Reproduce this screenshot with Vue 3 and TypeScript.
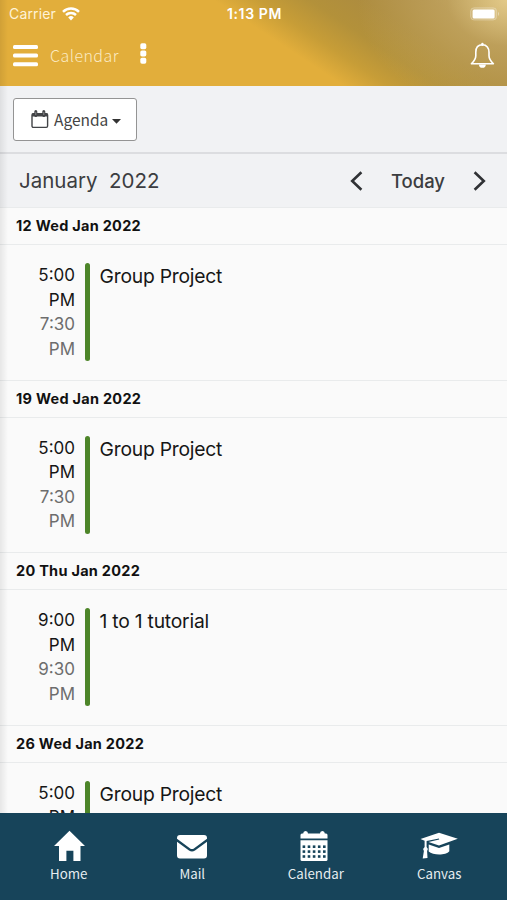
<script setup lang="ts">
interface CalendarEvent {
  start: string
  end: string
  title: string
}

interface AgendaDay {
  label: string
  event: CalendarEvent
}

const days: AgendaDay[] = [
  { label: '12 Wed Jan 2022', event: { start: '5:00', end: '7:30', title: 'Group Project' } },
  { label: '19 Wed Jan 2022', event: { start: '5:00', end: '7:30', title: 'Group Project' } },
  { label: '20 Thu Jan 2022', event: { start: '9:00', end: '9:30', title: '1 to 1 tutorial' } },
  { label: '26 Wed Jan 2022', event: { start: '5:00', end: '7:30', title: 'Group Project' } },
]

const calendarRows = [15.4, 20.3, 25.2]
const calendarCols = [2.6, 7.7, 12.8, 17.9, 23]
</script>

<template>
  <div class="app">
    <header class="header">
      <div class="status">
        <div class="carrier">
          <span>Carrier</span>
          <svg width="18" height="14" viewBox="0 0 18 14" fill="none" stroke="#fff" stroke-width="2.5">
            <path d="M1 4.8a11.5 11.5 0 0 1 16 0" />
            <path d="M4 8a7.3 7.3 0 0 1 10 0" />
            <path d="M6.2 10.4a4 4 0 0 1 5.6 0L9 13.4z" fill="#fff" stroke="none" />
          </svg>
        </div>
        <span class="clock">1:13 PM</span>
        <svg class="battery" width="30" height="14" viewBox="0 0 30 14">
          <rect x=".6" y=".8" width="26" height="12.2" rx="3.5" fill="#fff" fill-opacity=".12" stroke="#fff" stroke-opacity=".25" />
          <rect x="2.6" y="2.6" width="22" height="8.8" rx="1.5" fill="#fff" />
          <path d="M28 4.8q2 2.1 0 4.2z" fill="#fff" fill-opacity=".4" />
        </svg>
      </div>
      <div class="titlebar">
        <svg width="25" height="22" viewBox="0 0 25 22" fill="#fff">
          <rect y="0" width="25" height="4" rx="1.5" />
          <rect y="8.6" width="25" height="4" rx="1.5" />
          <rect y="17.2" width="25" height="4" rx="1.5" />
        </svg>
        <h1>Calendar</h1>
        <svg class="more" width="7" height="22" viewBox="0 0 7 22" fill="#fff">
          <rect x=".3" y=".2" width="6" height="6" rx="1.7" />
          <rect x=".3" y="7.4" width="6" height="6" rx="1.7" />
          <rect x=".3" y="14.7" width="6" height="6" rx="1.7" />
        </svg>
        <svg class="bell" width="25" height="28" viewBox="0 0 25 28" fill="none" stroke="#fff" stroke-width="1.6" stroke-linejoin="round">
          <path d="M12.4 2.8C8 2.8 5.8 6 5.8 10.2v3.5c0 3.4-1.8 5.5-4.4 8.1h22c-2.6-2.6-4.4-4.7-4.4-8.1v-3.5c0-4.2-2.2-7.4-6.6-7.4z" />
          <path d="M12.4 2.8V2" stroke-width="2.4" stroke-linecap="round" />
          <path d="M9 22.4h6.8a3.4 3.4 0 0 1-6.8 0z" fill="#fff" stroke="none" />
        </svg>
      </div>
    </header>

    <section class="toolbar">
      <button class="view">
        <svg width="18" height="19" viewBox="0 0 18 19" fill="none" stroke="#424447">
          <rect x="1" y="3.8" width="15.6" height="13.6" rx="1.3" stroke-width="1.4" />
          <path d="M1 5h15.6" stroke-width="3" />
          <path d="M4.8 1.5v4M12.8 1.5v4" stroke-width="3" stroke-linecap="round" />
          <path d="M4.8 2v3M12.8 2v3" stroke="#aaa" stroke-width=".7" />
        </svg>
        <span>Agenda</span>
        <svg width="9" height="5" viewBox="0 0 9 5"><path d="M0 0h9L4.5 4.8z" fill="#333" /></svg>
      </button>
    </section>

    <section class="month">
      <h2>January&nbsp; 2022</h2>
      <svg width="13" height="20" viewBox="0 0 13 20" fill="none" stroke="#303235" stroke-width="2.6">
        <path d="M11.4 1.2 2.2 10l9.2 8.8" />
      </svg>
      <span class="today">Today</span>
      <svg width="13" height="20" viewBox="0 0 13 20" fill="none" stroke="#303235" stroke-width="2.6">
        <path d="m1.6 1.2 9.2 8.8-9.2 8.8" />
      </svg>
    </section>

    <main class="agenda">
      <article v-for="day in days" :key="day.label" class="day">
        <h3>{{ day.label }}</h3>
        <div class="event">
          <div class="times">
            <div>{{ day.event.start }}<br />PM</div>
            <div class="end">{{ day.event.end }}<br />PM</div>
          </div>
          <div class="bar"></div>
          <div class="title">{{ day.event.title }}</div>
        </div>
      </article>
    </main>

    <nav class="tabs">
      <a class="tab">
        <svg width="32" height="32" viewBox="0 0 32 32" fill="#fff">
          <path d="M16.500.800 32 16H27.500v15h-7.100V20.800h-7V31H6V16H1z" />
        </svg>
        <span>Home</span>
      </a>
      <a class="tab">
        <svg width="32" height="32" viewBox="0 0 32 32" fill="#fff">
          <path d="M4 5h24a3 3 0 0 1 3 3v.8L18.2 18.2a3.6 3.6 0 0 1-4.4 0L1 8.8V8a3 3 0 0 1 3-3z" />
          <path d="m1 11.7 12 8.7a5 5 0 0 0 6 0l12-8.7V25.5a3 3 0 0 1-3 3H4a3 3 0 0 1-3-3z" />
        </svg>
        <span>Mail</span>
      </a>
      <a class="tab calendar">
        <svg width="28" height="32" viewBox="0 0 28 32">
          <path d="M2 3.500H3.200q0-2.500 2.400-2.500t2.400 2.500h12q0-2.500 2.400-2.500t2.400 2.500H26q1.500 0 1.500 1.500v3.600H.5V5q0-1.500 1.500-1.500z" fill="#fff" />
          <path d="M.5 10.300h27v19.200q0 1.500-1.500 1.500H2q-1.500 0-1.500-1.500z" fill="#fff" />
          <g fill="#17445a">
            <template v-for="y in calendarRows" :key="y">
              <rect v-for="x in calendarCols" :key="x" :x="x" :y="y" width="2.6" height="2.6" />
            </template>
          </g>
        </svg>
        <span>Calendar</span>
      </a>
      <a class="tab">
        <svg width="38" height="32" viewBox="0 0 38 32" fill="#fff">
          <path d="M19 2.700 37.800 8.700 19 15.600 8.500 11.900 19.200 9.400 19 8.400 6.600 10.900V17l1.300 2-.8 2 .4 7-4.800.4L3.900 21l-.8-2 1.500-2v-6.200L.5 9z" />
          <path d="m8.700 14.400 10.300 3.700 10.300-3.700v6.800C26 25.500 12.800 25.300 8.700 21.500z" />
        </svg>
        <span>Canvas</span>
      </a>
    </nav>
    <div class="edge"></div>
  </div>
</template>

<style>
body {
  margin: 0;
}
</style>

<style scoped>
.app {
  position: relative;
  display: flex;
  flex-direction: column;
  width: 507px;
  height: 900px;
  overflow: hidden;
  background: #fafafa;
  color: #161616;
  font-family: Inter, 'Liberation Sans', sans-serif;
}
h1, h2, h3 {
  margin: 0;
  font-weight: 400;
}
svg {
  display: block;
  flex: none;
}
.header {
  flex: none;
  height: 86px;
  box-sizing: border-box;
  color: #fff;
  background:
    radial-gradient(ellipse 150px 115px at 100% 0, rgba(232, 207, 142, 0.9), rgba(214, 188, 120, 0.4) 40%, rgba(174, 141, 62, 0) 100%),
    linear-gradient(33.5deg, #e2ae3b 0 54%, #c79d37 61%, #b3913a 69%, #ad8c3f 78%, #ad8c46 88%, #b39654 100%);
}
.status {
  display: grid;
  grid-template-columns: 1fr auto 1fr;
  align-items: center;
  height: 27px;
  padding: 0 7px 0 9px;
}
.carrier {
  display: flex;
  align-items: center;
  gap: 6px;
  font-size: 14px;
  letter-spacing: 0.15px;
  color: #fff3d7;
}
.clock {
  font-size: 14px;
  font-weight: 600;
  letter-spacing: 0.65px;
}
.battery {
  justify-self: end;
}
.titlebar {
  display: flex;
  align-items: center;
  height: 58px;
  padding: 0 12px 0 13px;
}
.titlebar h1 {
  width: 71px;
  margin: -2px 0 0 12px;
  font: 300 16px/24px 'Noto Sans CJK SC', sans-serif;
  letter-spacing: 0.45px;
  color: #fbeac2;
}
.more {
  margin: -4px 0 0 19px;
}
.bell {
  margin: -1px 0 0 auto;
}
.toolbar {
  flex: none;
  height: 68px;
  box-sizing: border-box;
  padding: 12px 13px;
  background: #f1f2f4;
  border-bottom: 2px solid #dcdde0;
}
.view {
  display: flex;
  align-items: center;
  width: 124px;
  height: 43px;
  box-sizing: border-box;
  padding: 0 0 0 17px;
  border: 1px solid #949494;
  border-radius: 3px;
  background: #fff;
  color: #444;
  font: 400 15.5px/24px 'Noto Sans CJK SC', sans-serif;
}
.view svg:last-child {
  margin-top: 3px;
}
.view span {
  margin: -1px 4px 0 5px;
}
.month {
  display: flex;
  flex: none;
  align-items: center;
  height: 53px;
  padding: 0 21px 0 19px;
  background: #f1f2f4;
  color: #3c3d40;
}
.month h2 {
  flex: 1;
  font-size: 20.5px;
}
.today {
  margin: 1px 28px 0;
  font-size: 18.5px;
  font-weight: 500;
}
.agenda {
  flex: 1;
  min-height: 0;
  overflow: hidden;
}
.day {
  height: 172.6px;
  box-sizing: border-box;
  border-top: 1px solid #e9ebec;
}
.day h3 {
  height: 36px;
  border-bottom: 1px solid #e9ebec;
  padding-left: 16px;
  font-size: 14.5px;
  font-weight: 700;
  line-height: 36px;
  letter-spacing: 0.27px;
  color: #111;
}
.event {
  display: flex;
  padding-top: 18px;
}
.times {
  width: 75px;
  font-size: 17px;
  line-height: 24.5px;
  text-align: right;
}
.end {
  color: #6d6d6d;
}
.bar {
  width: 5px;
  height: 98px;
  margin: 0 9.5px 0 10px;
  border-radius: 2.5px;
  background: #4d8529;
}
.title {
  font-size: 19.3px;
  line-height: 26px;
  letter-spacing: -0.22px;
}
.tabs {
  display: grid;
  flex: none;
  grid-template-columns: repeat(4, 123.5px);
  height: 87px;
  box-sizing: border-box;
  padding: 17px 0 0 7px;
  background: #17445a;
}
.tab {
  display: flex;
  flex-direction: column;
  align-items: center;
  color: #e6edf0;
  font: 400 13.3px/20px 'Noto Sans CJK SC', sans-serif;
}
.calendar svg {
  margin-right: 3px;
}
.tab span {
  margin-top: 2px;
}
/* soft shadow that runs down the left edge of the screen */
.edge {
  position: absolute;
  top: 0;
  left: 0;
  width: 8px;
  height: 813px;
  background: linear-gradient(90deg, rgba(0, 0, 0, 0.08), rgba(0, 0, 0, 0));
}
</style>
